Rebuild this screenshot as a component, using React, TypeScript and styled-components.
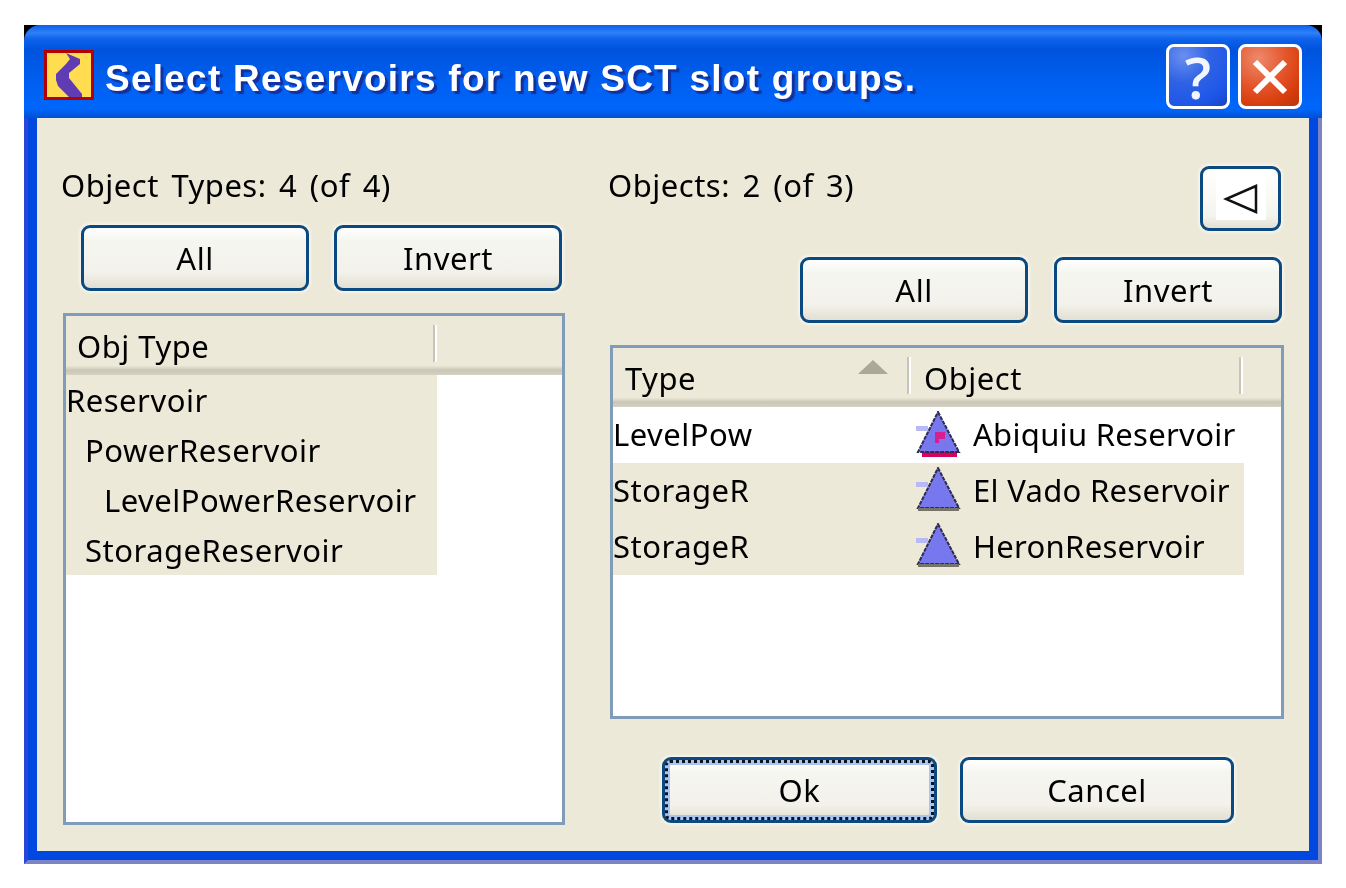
import React from "react";
import styled, { createGlobalStyle } from "styled-components";

const GlobalStyle = createGlobalStyle`
  html, body {
    margin: 0;
    padding: 0;
    background: #fff;
  }
  body {
    width: 1346px;
    height: 888px;
    overflow: hidden;
    font-family: "Noto Sans", "Liberation Sans", sans-serif;
  }
`;

const Page = styled.div`
  padding: 25px 24px 0;
  width: 1298px;
`;

const Frame = styled.div`
  width: 1298px;
  height: 839px;
  display: flex;
  flex-direction: column;
  background: linear-gradient(#000 0 20px, transparent 20px);
  filter: blur(0.5px);
`;

const TitleBar = styled.div`
  height: 93px;
  flex: none;
  display: flex;
  align-items: center;
  padding: 0 20px;
  border-radius: 16px 16px 0 0;
  background: linear-gradient(
    #0a5fe8 0,
    #2f80fa 8px,
    #0f62ea 14px,
    #0053dd 24px,
    #0060f2 60px,
    #0066fb 84px,
    #0052d6 92px
  );
`;

const AppIcon = styled.svg`
  width: 50px;
  height: 50px;
  flex: none;
  margin-top: 6px;
`;

const TitleText = styled.div`
  margin-left: 11px;
  margin-top: 14px;
  flex: 1;
  color: #fff;
  font-family: "Liberation Sans", sans-serif;
  font-weight: 700;
  font-size: 37px;
  letter-spacing: 1.25px;
  white-space: nowrap;
  text-shadow: 3px 3px 1px #14309c;
`;

const CaptionButton = styled.div<{ $close?: boolean }>`
  width: 64px;
  height: 65px;
  box-sizing: border-box;
  margin-left: ${(p) => (p.$close ? "8px" : "0")};
  margin-top: 10px;
  display: flex;
  align-items: center;
  justify-content: center;
  border: 3px solid #fff;
  border-radius: 8px;
  color: #f2f5ff;
  font-family: "Open Sans", sans-serif;
  font-weight: 600;
  font-size: 58px;
  line-height: 1;
  background: ${(p) =>
    p.$close
      ? "radial-gradient(circle at 30% 20%, #ec8a6c 0, #e4552a 45%, #d73d0c 75%, #b8360f 100%)"
      : "radial-gradient(circle at 25% 15%, #6a8ff0 0, #2f63e4 40%, #1e56e8 75%, #1644bf 100%)"};
`;

const Body = styled.div`
  flex: 1;
  display: flex;
  border-style: solid;
  border-width: 0 13px 13px;
  border-color: #0048e0;
  position: relative;
  background: #ece9d8;

  &::after {
    content: "";
    position: absolute;
    inset: 0 -13px -13px -13px;
    border-style: solid;
    border-width: 0 4px 4px;
    border-color: #7b84c4;
    border-left-color: #2a46d8;
    pointer-events: none;
  }
`;

const Client = styled.div`
  flex: 1;
  display: grid;
  grid-template-columns: 504px 676px;
  column-gap: 43px;
  padding: 47px 0 0 24px;
  background: #ece9d8;
  color: #000;
  letter-spacing: 0.5px;
`;

const Column = styled.div`
  display: flex;
  flex-direction: column;
  align-items: flex-start;
`;

const Label = styled.div`
  height: 40px;
  line-height: 40px;
  font-size: 31px;
  word-spacing: 4px;
  white-space: nowrap;
`;

const TopRow = styled.div`
  width: 100%;
  display: flex;
  justify-content: space-between;
`;

const ButtonRow = styled.div<{ $left: number; $top: number; $gap: number }>`
  display: flex;
  gap: ${(p) => p.$gap}px;
  margin-left: ${(p) => p.$left}px;
  margin-top: ${(p) => p.$top}px;
`;

const Button = styled.div<{ $width?: number }>`
  position: relative;
  width: ${(p) => p.$width ?? 228}px;
  height: 66px;
  box-sizing: border-box;
  display: flex;
  align-items: center;
  justify-content: center;
  border: 3px solid #0b4a80;
  border-radius: 9px;
  font-size: 31px;
  background: linear-gradient(#ffffff 0, #f6f6f1 20%, #f2f1ea 75%, #e2dfd3 100%);
  box-shadow: 0 0 3px 2px rgba(255, 255, 255, 0.55);
`;

const FocusButton = styled(Button)`
  box-shadow: inset 0 0 0 5px #a9c4f2, 0 0 3px 2px rgba(255, 255, 255, 0.55);

  &::after {
    content: "";
    position: absolute;
    inset: 0;
    border: 3px dotted #10121c;
    border-radius: 5px;
  }
`;

const ArrowButton = styled.div`
  width: 81px;
  height: 65px;
  box-sizing: border-box;
  margin: 1px 3px 0 0;
  display: flex;
  align-items: center;
  justify-content: center;
  border: 3px solid #0b4a80;
  border-radius: 9px;
  background: linear-gradient(#fff 0, #f4f4ee 80%, #e2dfd3 100%);
  box-shadow: 0 0 3px 2px rgba(255, 255, 255, 0.55);
`;

const ArrowFace = styled.div`
  width: 50px;
  height: 43px;
  background: #fff;
  display: flex;
  align-items: center;
  justify-content: center;
`;

const List = styled.div<{ $height: number; $top: number }>`
  width: calc(100% - 2px);
  height: ${(p) => p.$height}px;
  margin: ${(p) => p.$top}px 0 0 2px;
  box-sizing: border-box;
  border: 3px solid #7f9db9;
  background: #fff;
  overflow: hidden;
`;

const Header = styled.div`
  height: 59px;
  display: flex;
  background: linear-gradient(#ece9d8 0, #ece9d8 84%, #cbc7b8 92%, #d5d2c3 100%);
`;

const HeaderCell = styled.div<{ $width: number; $pad: number }>`
  position: relative;
  width: ${(p) => p.$width}px;
  height: 50px;
  box-sizing: border-box;
  padding-left: ${(p) => p.$pad}px;
  padding-top: 5px;
  line-height: 50px;
  font-size: 31px;
  flex: none;

  &::after {
    content: "";
    position: absolute;
    right: 0;
    top: 9px;
    width: 4px;
    height: 37px;
    background: linear-gradient(90deg, #c9c5b6 50%, #fff 50%);
  }
`;

const SortArrow = styled.div`
  position: absolute;
  right: 23px;
  top: 12px;
  width: 0;
  height: 0;
  border-left: 15px solid transparent;
  border-right: 15px solid transparent;
  border-bottom: 14px solid #aca899;
`;

const TreeRow = styled.div<{ $depth: number }>`
  width: 371px;
  height: 50px;
  line-height: 50px;
  box-sizing: border-box;
  padding-left: ${(p) => p.$depth * 19}px;
  background: #ece9d8;
  font-size: 31px;
  white-space: nowrap;
`;

const ObjectRow = styled.div<{ $selected: boolean }>`
  width: ${(p) => (p.$selected ? "631px" : "100%")};
  height: 56px;
  display: flex;
  align-items: center;
  background: ${(p) => (p.$selected ? "#ece9d8" : "#fff")};
  font-size: 31px;
  white-space: nowrap;

  &:first-of-type {
    height: 57px;
  }
`;

const TypeCell = styled.div`
  width: 302px;
  flex: none;
  box-sizing: border-box;
  padding-bottom: 2px;
`;

const ObjectName = styled.div`
  padding-bottom: 2px;
  letter-spacing: 0.3px;
`;

const ObjIcon = styled.svg`
  width: 46px;
  height: 48px;
  flex: none;
  margin-right: 12px;
`;

const Footer = styled.div`
  display: flex;
  gap: 23px;
  margin: 38px 0 0 54px;
`;

const treeRows = [
  { name: "Reservoir", depth: 0 },
  { name: "PowerReservoir", depth: 1 },
  { name: "LevelPowerReservoir", depth: 2 },
  { name: "StorageReservoir", depth: 1 },
];

const objectRows = [
  { type: "LevelPow", name: "Abiquiu Reservoir", power: true, selected: false },
  { type: "StorageR", name: "El Vado Reservoir", power: false, selected: true },
  { type: "StorageR", name: "HeronReservoir", power: false, selected: true },
];

const ReservoirIcon = ({ power }: { power: boolean }) => (
  <ObjIcon viewBox="0 0 46 48">
    {power && <rect x="7" y="38" width="35" height="8" fill="#d6005f" />}
    <polygon
      points="23,1 44,41 3,41"
      fill="#7878ee"
      stroke="#2b2b55"
      strokeWidth="2"
      strokeDasharray="4 1"
    />
    <rect x="1" y="15" width="12" height="5" fill="#b9b9f5" />
    {!power && <rect x="3" y="41" width="41" height="3" fill="#77756a" />}
    {power && <path d="M20 21 H30 V28 H24 V32 H20 Z" fill="#d6208f" />}
  </ObjIcon>
);

export default function App() {
  return (
    <>
      <GlobalStyle />
      <Page>
        <Frame>
          <TitleBar>
            <AppIcon viewBox="0 0 50 50">
              <rect x="1.5" y="1.5" width="47" height="47" fill="#ffdc50" stroke="#b40000" strokeWidth="3" />
              <path d="M22 3 L36 9 L36 14 L25 23 L25 28 L38 44 L38 47 L25 47 L14 36 L12 30 L12 24 L22 14 L26 9 Z" fill="#5f3cb4" />
            </AppIcon>
            <TitleText>Select Reservoirs for new SCT slot groups.</TitleText>
            <CaptionButton>?</CaptionButton>
            <CaptionButton $close>
              <svg width="38" height="38" viewBox="0 0 38 38">
                <path d="M4 4 L34 34 M34 4 L4 34" stroke="#fff" strokeWidth="6" />
              </svg>
            </CaptionButton>
          </TitleBar>
          <Body>
            <Client>
              <Column>
                <Label>Object Types: 4 (of 4)</Label>
                <ButtonRow $left={20} $top={20} $gap={25}>
                  <Button>All</Button>
                  <Button>Invert</Button>
                </ButtonRow>
                <List $height={512} $top={22}>
                  <Header>
                    <HeaderCell $width={371} $pad={11}>Obj Type</HeaderCell>
                  </Header>
                  {treeRows.map((row) => (
                    <TreeRow key={row.name} $depth={row.depth}>{row.name}</TreeRow>
                  ))}
                </List>
              </Column>
              <Column>
                <TopRow>
                  <Label>Objects: 2 (of 3)</Label>
                  <ArrowButton>
                    <ArrowFace>
                      <svg width="36" height="32" viewBox="0 0 36 32">
                        <path d="M33 3 L3 16 L33 29 Z" fill="none" stroke="#111" strokeWidth="2.5" />
                      </svg>
                    </ArrowFace>
                  </ArrowButton>
                </TopRow>
                <ButtonRow $left={192} $top={26} $gap={26}>
                  <Button>All</Button>
                  <Button>Invert</Button>
                </ButtonRow>
                <List $height={374} $top={22}>
                  <Header>
                    <HeaderCell $width={298} $pad={12}>
                      Type
                      <SortArrow />
                    </HeaderCell>
                    <HeaderCell $width={332} $pad={13}>Object</HeaderCell>
                  </Header>
                  {objectRows.map((row) => (
                    <ObjectRow key={row.name} $selected={row.selected}>
                      <TypeCell>{row.type}</TypeCell>
                      <ReservoirIcon power={row.power} />
                      <ObjectName>{row.name}</ObjectName>
                    </ObjectRow>
                  ))}
                </List>
                <Footer>
                  <FocusButton $width={275}>Ok</FocusButton>
                  <Button $width={274}>Cancel</Button>
                </Footer>
              </Column>
            </Client>
          </Body>
        </Frame>
      </Page>
    </>
  );
}
